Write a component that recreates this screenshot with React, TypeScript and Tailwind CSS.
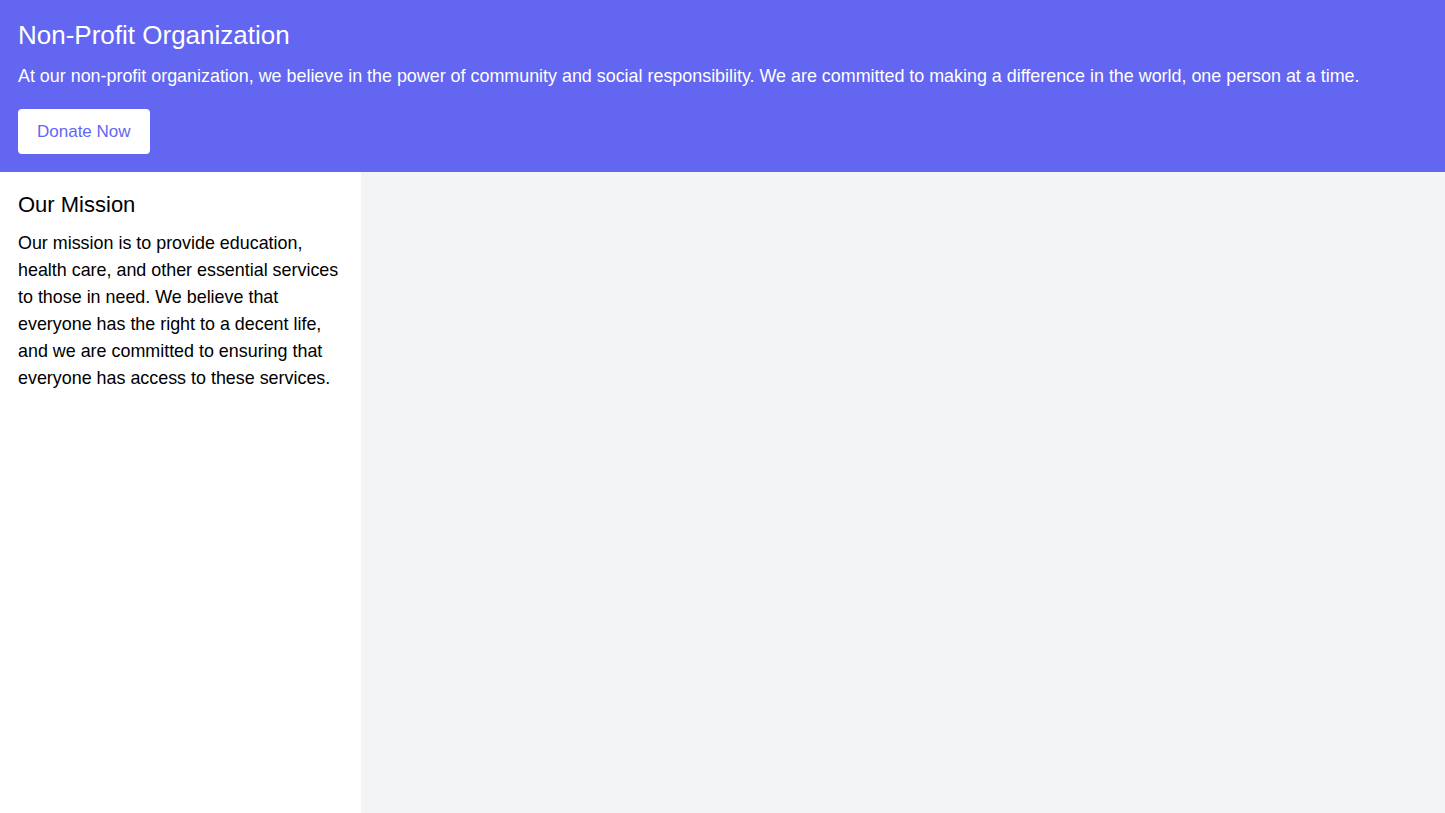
export default function App() {
  return (
    <div className="min-h-screen flex flex-col bg-[#f3f4f6] font-['Liberation_Sans',Arial,sans-serif]">
      <header className="bg-[#6366f1] text-white px-[18px] pt-[19px] pb-[18px]">
        <h1 className="text-[26px] leading-[32px] mb-3">Non-Profit Organization</h1>
        <p className="text-[17.9px] leading-[27px] mb-[19px]">
          At our non-profit organization, we believe in the power of community and social responsibility. We are committed to making a difference in the world, one person at a time.
        </p>
        <button className="bg-white text-[#6366f1] text-[17px] leading-[25px] px-[19px] py-2.5 rounded">
          Donate Now
        </button>
      </header>
      <div className="flex flex-1">
        <aside className="w-1/4 bg-white p-[18px] text-black">
          <h2 className="text-[22px] leading-[30px] mb-[10px]">Our Mission</h2>
          <p className="text-[17.9px] leading-[27px]">
            Our mission is to provide education, health care, and other essential services to those in need. We believe that everyone has the right to a decent life, and we are committed to ensuring that everyone has access to these services.
          </p>
        </aside>
        <main className="flex-1"></main>
      </div>
    </div>
  );
}
